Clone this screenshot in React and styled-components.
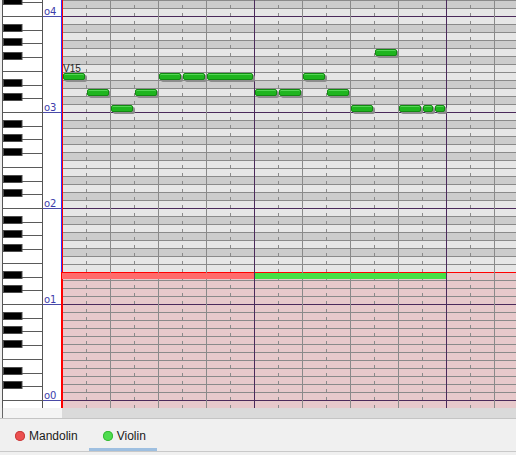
import React from 'react';
import styled, { createGlobalStyle } from 'styled-components';

const GlobalStyle = createGlobalStyle`
  html, body { margin: 0; padding: 0; background: #f0f0f0; }
  body { font-family: "Liberation Sans", Arial, sans-serif; }
`;

const ROW_H = 8;
const ROWS = 51;
const BEAT = 24;
const RED_ROW = 34;
const BLACK = [1, 3, 6, 8, 10];

const semitone = (i) => (((1 - i) % 12) + 12) % 12;

const Window = styled.div`
  width: 516px;
  height: 455px;
  overflow: hidden;
  background: #f0f0f0;
  display: flex;
  flex-direction: column;
`;

const Roll = styled.div`
  display: flex;
  height: 408px;
  flex: none;
`;

const KeyboardSvg = styled.svg`
  display: block;
  flex: none;
`;

const LabelColumn = styled.div`
  width: 18px;
  flex: none;
  background: #ffffff;
  display: flex;
  flex-direction: column;
`;

const OctaveBlock = styled.div`
  height: ${(p) => p.$h}px;
  flex: ${(p) => (p.$last ? '1' : 'none')};
  border-bottom: ${(p) => (p.$last ? 'none' : '1px solid #4a4aa6')};
  display: flex;
  align-items: flex-end;
  padding-left: 1px;
`;

const OctaveLabel = styled.span`
  font-family: "DejaVu Sans", sans-serif;
  font-size: 10px;
  line-height: 8px;
  color: #3d3dab;
`;

const Grid = styled.div`
  position: relative;
  width: 455px;
  flex: none;
  display: flex;
  flex-direction: column;
`;

const Row = styled.div`
  height: ${ROW_H}px;
  flex: none;
  background-color: ${(p) => p.$fill};
  background-image:
    ${(p) =>
      p.$pink
        ? 'linear-gradient(to right, #ff0000 0 2px, transparent 2px)'
        : 'linear-gradient(to right, #3434ff 0 1px, #ff0000 1px 2px, transparent 2px)'},
    repeating-linear-gradient(to right, transparent 0 1px, #4b2a5b 1px 2px, transparent 2px 192px),
    repeating-linear-gradient(to right, transparent 0 1px, #8a8a8a 1px 2px, transparent 2px 48px),
    repeating-linear-gradient(to right, transparent 0 25px, #8a8a8a 25px 26px, transparent 26px 48px),
    linear-gradient(${(p) => p.$line}, ${(p) => p.$line});
  background-size: 100% 100%, 100% 100%, 100% 100%, 100% 3px, 100% 1px;
  background-position: 0 0, 0 0, 0 0, 0 100%, 0 0;
  background-repeat: no-repeat;
`;

const Note = styled.div`
  position: absolute;
  box-sizing: border-box;
  height: 7px;
  background: #1fb51f;
  border: 1px solid #118a11;
  border-radius: 2px;
  box-shadow: inset 0 1px 0 #55d655, 2px 2px 0 #8c8c8c;
`;

const RangeBar = styled.div`
  position: absolute;
  top: ${RED_ROW * ROW_H + 1}px;
  height: 6px;
  background: ${(p) => p.$color};
`;

const Velocity = styled.span`
  position: absolute;
  font-size: 10px;
  line-height: 10px;
  color: #222;
  white-space: nowrap;
`;

const Strip = styled.div`
  display: flex;
  height: 10px;
  flex: none;
`;

const StripCorner = styled.div`
  width: 59px;
  margin-left: 2px;
  border-left: 1px solid #666;
  background: #f4f4f4;
`;

const StripTrack = styled.div`
  flex: 1;
  background: #dadada;
`;

const TabBar = styled.div`
  display: flex;
  height: 32px;
  flex: none;
  border-top: 1px solid #c4c4c4;
  border-bottom: 1px solid #c9c9c9;
  padding-left: 1px;
`;

const Tab = styled.div`
  box-sizing: border-box;
  height: 32px;
  display: flex;
  align-items: center;
  gap: 4px;
  padding: 4px 11px 0 14px;
  border-bottom: 3px solid ${(p) => (p.$active ? '#9ebfe0' : 'transparent')};
  font-size: 12px;
  color: #1a1a1a;
`;

const Dot = styled.span`
  width: 10px;
  height: 10px;
  border-radius: 50%;
  background: ${(p) => p.$color};
  box-shadow: inset 0 0 0 1px ${(p) => p.$edge};
`;

const rowOf = { G3: 6, E3: 9, D3: 11, C3: 13 };

const notes = [
  [0, 1, 'E3'], [1, 1, 'D3'], [2, 1, 'C3'], [3, 1, 'D3'],
  [4, 1, 'E3'], [5, 1, 'E3'], [6, 2, 'E3'],
  [8, 1, 'D3'], [9, 1, 'D3'], [10, 1, 'E3'], [11, 1, 'D3'],
  [12, 1, 'C3'], [13, 1, 'G3'], [14, 1, 'C3'], [15, 0.5, 'C3'], [15.5, 0.5, 'C3'],
];

function Keyboard() {
  const items = [];
  for (let k = -1; k <= 4; k++) {
    const O = 16 + 96 * k;
    for (let j = 0; j < 7; j++) {
      const y = O + Math.round((96 * j) / 7);
      items.push(<line key={`w${k}-${j}`} x1="3" x2="42" y1={y + 0.5} y2={y + 0.5} stroke="#5a5a5a" />);
    }
    [8, 22, 36, 63, 77].forEach((off, b) => {
      items.push(
        <rect key={`b${k}-${b}`} x="3.5" y={O + off + 0.5} width="18.5" height="7" fill="#000" stroke="#4d4d4d" />
      );
    });
  }
  return (
    <KeyboardSvg width="43" height="408" viewBox="0 0 43 408">
      <rect x="3" y="0" width="39" height="408" fill="#fff" />
      {items}
      <line x1="2.5" x2="2.5" y1="0" y2="408" stroke="#555" />
      <line x1="42.5" x2="42.5" y1="0" y2="408" stroke="#555" />
    </KeyboardSvg>
  );
}

export default function App() {
  const rows = Array.from({ length: ROWS }, (_, i) => {
    const s = semitone(i);
    const pink = i >= RED_ROW;
    const fill = pink ? '#e7c9cb' : BLACK.includes(s) ? '#cccccc' : '#e6e6e6';
    const line = i === RED_ROW ? '#ff0000' : s === 11 ? '#4b2a5b' : '#8a8a8a';
    return <Row key={i} $fill={fill} $line={line} $pink={pink} />;
  });

  const blocks = [
    { h: 16, label: 'o4' },
    { h: 95, label: 'o3' },
    { h: 95, label: 'o2' },
    { h: 95, label: 'o1' },
    { h: 95, label: 'o0' },
  ];

  return (
    <>
      <GlobalStyle />
      <Window>
        <Roll>
          <Keyboard />
          <LabelColumn>
            {blocks.map((b) => (
              <OctaveBlock key={b.label} $h={b.h}>
                <OctaveLabel>{b.label}</OctaveLabel>
              </OctaveBlock>
            ))}
            <OctaveBlock $h={7} $last />
          </LabelColumn>
          <Grid>
            {rows}
            <RangeBar $color="#ff6b6b" style={{ left: 1, width: 192 }} />
            <RangeBar $color="#46e046" style={{ left: 194, width: 191 }} />
            <Velocity style={{ left: 2, top: 64 }}>V15</Velocity>
            {notes.map(([start, dur, pitch], n) => (
              <Note
                key={n}
                style={{
                  left: 2 + start * BEAT,
                  top: rowOf[pitch] * ROW_H + 1,
                  width: dur * BEAT - 2,
                }}
              />
            ))}
          </Grid>
        </Roll>
        <Strip>
          <StripCorner />
          <StripTrack />
        </Strip>
        <TabBar>
          <Tab>
            <Dot $color="#ec5050" $edge="#c63c3c" />
            Mandolin
          </Tab>
          <Tab $active>
            <Dot $color="#4fdc4f" $edge="#35b835" />
            Violin
          </Tab>
        </TabBar>
      </Window>
    </>
  );
}
